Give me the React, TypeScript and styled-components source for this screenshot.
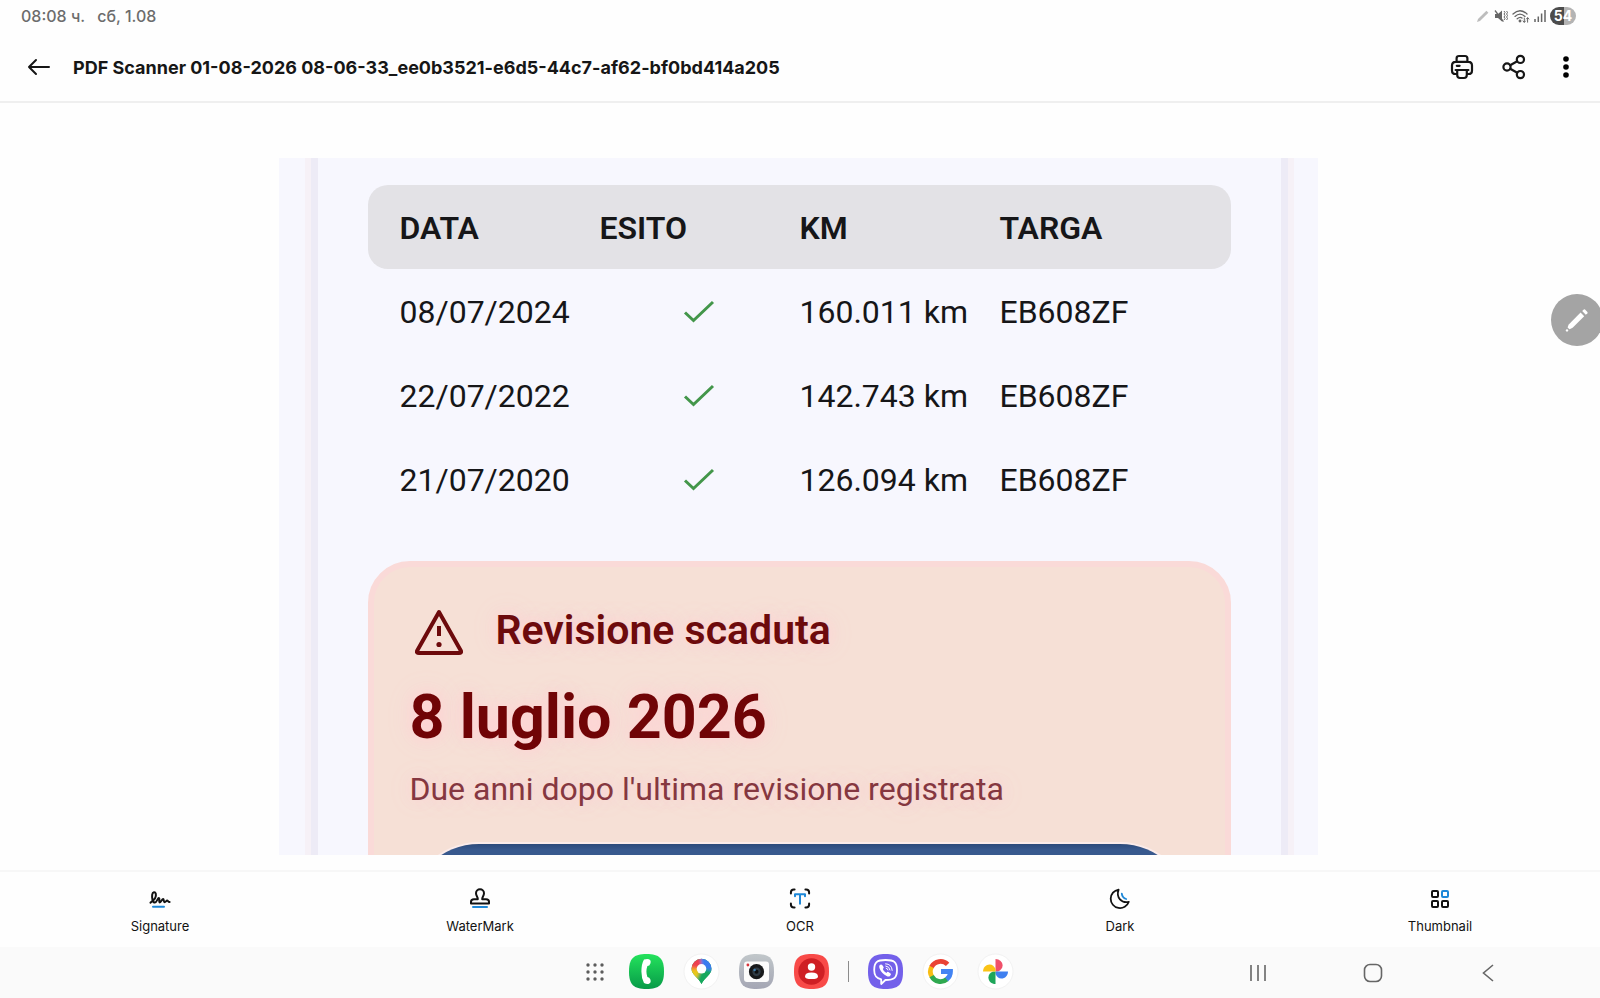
import React from "react";
import styled, { createGlobalStyle } from "styled-components";

const GlobalStyle = createGlobalStyle`
  *, *::before, *::after { box-sizing: border-box; }
  body { margin: 0; background: #fefefe; }
  svg { display: block; flex: none; }
`;

const uiFont = `Inter, "Open Sans", sans-serif`;
const docFont = `Roboto, "Liberation Sans", sans-serif`;

const Screen = styled.div`
  position: relative;
  display: flex;
  flex-direction: column;
  height: 100vh;
  overflow: hidden;
  background: #fefefe;
  color: #161616;
  font-family: ${uiFont};
`;

const StatusBar = styled.div`
  display: flex;
  align-items: center;
  justify-content: space-between;
  height: 32px;
  padding: 0 24px 0 21px;
  color: #6c6c6c;
  font-size: 16px;
  font-weight: 500;
  line-height: 20px;
`;

const StatusGroup = styled.div<{ $gap: number }>`
  display: flex;
  align-items: center;
  gap: ${(p) => p.$gap}px;
`;

const Battery = styled.span`
  width: 26px;
  height: 18px;
  border-radius: 9px;
  background: linear-gradient(90deg, #4c4c4c 54%, #b4b4b4 54%);
  color: #fff;
  font-size: 14px;
  font-weight: 700;
  line-height: 18px;
  text-align: center;
`;

const AppBar = styled.header`
  display: flex;
  align-items: center;
  height: 71px;
  padding: 0 19px 0 24px;
  border-bottom: 2px solid #efefef;
`;

const IconButton = styled.button`
  display: flex;
  align-items: center;
  justify-content: center;
  width: 30px;
  height: 40px;
  padding: 0;
  border: 0;
  background: none;
  color: inherit;
`;

const Title = styled.h1`
  flex: 1;
  margin: 0;
  padding: 2px 0 0 19px;
  font-size: 18px;
  font-weight: 700;
  line-height: 24px;
`;

const Actions = styled.div`
  display: flex;
  gap: 22px;
`;

const Viewer = styled.main`
  flex: 1;
  min-height: 0;
  padding: 55px 3px 15px 0;
`;

const Paper = styled.article`
  width: 65%;
  height: 100%;
  margin: 0 auto;
  padding: 0 30px 0 32px;
  overflow: hidden;
  background: #f7f7fe;
  font-family: ${docFont};
`;

const PaperInner = styled.div`
  height: 100%;
  padding: 27px 50px 0;
  border: solid #edebf6;
  border-width: 0 7px;
  box-shadow: -6px 0 #f6f1f7, 6px 0 #f6f1f7;
`;

const Table = styled.table`
  width: 100%;
  border-spacing: 0;
  table-layout: fixed;
  color: #161618;
  font-size: 32px;
  line-height: 36px;
  text-align: left;
`;

const HeadCell = styled.th<{ $width?: number }>`
  width: ${(p) => (p.$width ? `${p.$width}px` : "auto")};
  height: 84px;
  padding: 2px 0 0;
  background: #e3e2e6;
  font-weight: 600;
  white-space: nowrap;
  &:first-child { padding-left: 31px; border-radius: 20px 0 0 20px; }
  &:last-child { border-radius: 0 20px 20px 0; }
`;

const Cell = styled.td`
  height: 84px;
  padding: 2px 0 0;
  white-space: nowrap;
  &:first-child { padding-left: 31px; }
  svg { margin: 0 auto; }
`;

const Notice = styled.section`
  height: 440px;
  margin-top: 40px;
  padding: 41px 35px 0;
  border: 6px solid #fadad8;
  border-radius: 42px;
  background: #f6e0d6;
  text-shadow: 0 0 14px #ffd2d4, 0 0 28px #ffd2d4;
`;

const NoticeHead = styled.div`
  display: flex;
  align-items: flex-start;
  gap: 30px;
  padding-left: 4px;
  color: #6d0a0c;
`;

const NoticeTitle = styled.h2`
  margin: 0;
  font-size: 41px;
  font-weight: 600;
  line-height: 44px;
`;

const NoticeDate = styled.p`
  margin: 25px 0 0;
  color: #700406;
  font-size: 61px;
  font-weight: 700;
  line-height: 72px;
`;

const NoticeText = styled.p`
  margin: 18px 0 37px;
  color: #853740;
  font-size: 32px;
  line-height: 36px;
  white-space: nowrap;
`;

const NoticeAction = styled.button`
  display: block;
  width: 100%;
  height: 140px;
  border: 0;
  border-radius: 70px;
  background: linear-gradient(#2c4b7c, #38598e 6px);
  box-shadow: 0 0 0 2px #fbeceb;
`;

const Toolbar = styled.nav`
  display: grid;
  grid-template-columns: repeat(5, 1fr);
  height: 77px;
  border-top: 2px solid #f7f7f7;
`;

const Tool = styled.button`
  display: flex;
  flex-direction: column;
  align-items: center;
  gap: 7px;
  padding: 16px 0 0;
  border: 0;
  background: none;
  color: #121212;
  font-family: inherit;
  font-size: 13px;
  line-height: 18px;
`;

const SystemNav = styled.nav`
  display: grid;
  grid-template-columns: 1fr auto 1fr;
  align-items: center;
  height: 51px;
  background: #fafafa;
`;

const Dock = styled.div`
  display: flex;
  grid-column: 2;
  align-items: center;
  gap: 18px;
  margin: 0 6px 2px 0;
`;

const DockButton = styled.button<{ $width?: number }>`
  display: flex;
  align-items: center;
  justify-content: center;
  width: ${(p) => p.$width ?? 37}px;
  height: 37px;
  padding: 0;
  border: 0;
  background: none;
`;

const Divider = styled.span`
  width: 1px;
  height: 21px;
  background: #8c8c8c;
`;

const NavKeys = styled.div`
  display: flex;
  justify-content: flex-end;
  padding-right: 55px;
`;

const NavKey = styled.button`
  display: flex;
  align-items: center;
  justify-content: center;
  width: 115px;
  height: 40px;
  padding: 0;
  border: 0;
  background: none;
`;

const EditFab = styled.button`
  position: absolute;
  top: 294px;
  right: -3px;
  display: flex;
  align-items: center;
  justify-content: center;
  width: 52px;
  height: 52px;
  padding: 0;
  border: 0;
  border-radius: 50%;
  background: #a4a4a4;
`;

const inspections = [
  { date: "08/07/2024", km: "160.011 km", plate: "EB608ZF" },
  { date: "22/07/2022", km: "142.743 km", plate: "EB608ZF" },
  { date: "21/07/2020", km: "126.094 km", plate: "EB608ZF" },
];

const line = {
  fill: "none",
  stroke: "currentColor",
  strokeLinecap: "round" as const,
  strokeLinejoin: "round" as const,
};
const blue = "#1e88d8";

const Check = () => (
  <svg width="32" height="24" viewBox="0 0 32 24" role="img" aria-label="Regolare">
    <path d="M2 12.5 L10.5 20.5 L30 2" fill="none" stroke="#43964a" strokeWidth="3" />
  </svg>
);

const tools = [
  {
    label: "Signature",
    icon: (
      <svg width="22" height="22" viewBox="0 0 22 22" {...line} strokeWidth="2">
        <path d="M1.5 14.6 C5.5 12 7.4 8.4 6.8 5.8 C6.2 3.6 3.6 3.8 3.2 6.6 C2.7 10 3.6 14.6 5.8 14.6 C7.8 14.6 8.6 10 9.8 10 C11 10 9.6 14.4 10.8 14.4 C12.1 14.4 13 11 14.1 11 C15.1 11 14.4 14.2 15.6 14.2 C16.7 14.2 17.2 12.6 18.2 12.6 C19 12.6 19 14 20.6 14" />
        <path d="M4 18.8 H15" stroke={blue} />
      </svg>
    ),
  },
  {
    label: "WaterMark",
    icon: (
      <svg width="22" height="22" viewBox="0 0 22 22" {...line} strokeWidth="2">
        <path d="M8.8 11.2 C9 9 7 8 7 5.2 A4 4 0 0 1 15 5.2 C15 8 13 9 13.2 11.2 H17 Q20 11.2 20 13.8 V15.6 H2 V13.8 Q2 11.2 5 11.2 Z" />
        <path d="M4 19 H18" stroke={blue} />
      </svg>
    ),
  },
  {
    label: "OCR",
    icon: (
      <svg width="22" height="22" viewBox="0 0 22 22" {...line} strokeWidth="2">
        <path d="M1.9 5.4 V4.4 Q1.9 1.4 4.9 1.4 H5.6 M16.4 1.4 H17.1 Q20.1 1.4 20.1 4.4 V5.4 M20.1 15.6 V16.6 Q20.1 19.6 17.1 19.6 H16.4 M5.6 19.6 H4.9 Q1.9 19.6 1.9 16.6 V15.6" />
        <path d="M6 8.2 V6.2 H16 V8.2 M11 6.2 V15.8" stroke={blue} />
      </svg>
    ),
  },
  {
    label: "Dark",
    icon: (
      <svg width="22" height="22" viewBox="0 0 22 22" {...line} strokeWidth="1.8">
        <path d="M9.6 1.6 A9.3 9.3 0 1 0 19.8 13.8 C12.6 15.4 6.8 9.6 9.6 1.6 Z" />
        <path d="M12.8 5.6 Q13.2 9.6 17.2 11" stroke={blue} />
      </svg>
    ),
  },
  {
    label: "Thumbnail",
    icon: (
      <svg width="22" height="22" viewBox="0 0 22 22" {...line} strokeWidth="2">
        <rect x="3" y="3" width="6" height="6" rx="1" />
        <rect x="13" y="3" width="6" height="6" rx="1" stroke={blue} />
        <rect x="3" y="13" width="6" height="6" rx="1" />
        <rect x="13" y="13" width="6" height="6" rx="1" />
      </svg>
    ),
  },
];

const squircle =
  "M18.5 1 C31.5 1 36 5.5 36 18.5 C36 31.5 31.5 36 18.5 36 C5.5 36 1 31.5 1 18.5 C1 5.5 5.5 1 18.5 1 Z";

const handset =
  "M16 6.5 Q19 5.5 21 6.2 Q23.4 7.2 22.4 10.4 Q21.6 13 19.4 13 Q18.4 15.8 18.4 18.5 Q18.4 21.2 19.4 24 Q21.6 24 22.4 26.6 Q23.4 29.8 21 30.8 Q19 31.5 16 30 Q13.4 25 13.4 18.5 Q13.4 11 16 6.5 Z";

const apps = [
  {
    label: "Telefono",
    icon: (
      <>
        <defs>
          <linearGradient id="phone" x1="0" y1="0" x2="0" y2="1">
            <stop offset="0" stopColor="#24e35c" />
            <stop offset="1" stopColor="#079a48" />
          </linearGradient>
        </defs>
        <path d={squircle} fill="url(#phone)" />
        <path d={handset} fill="#fff" />
      </>
    ),
  },
  {
    label: "Maps",
    icon: (
      <>
        <defs>
          <clipPath id="pin">
            <path d="M18.5 5.8 A10 10 0 0 1 28.5 15.8 C28.5 22 21.5 24.5 18.5 31 C15.5 24.5 8.5 22 8.5 15.8 A10 10 0 0 1 18.5 5.8 Z" />
          </clipPath>
          <filter id="soft" x="-20%" y="-20%" width="140%" height="140%">
            <feGaussianBlur stdDeviation="1.4" />
          </filter>
        </defs>
        <circle cx="18.5" cy="18.5" r="17.5" fill="#fff" stroke="#f2f2f2" />
        <g clipPath="url(#pin)">
          <rect x="4" y="2" width="30" height="32" fill="#1ba75a" />
          <g filter="url(#soft)">
            <path d="M18.5 15.8 L17 0 L36 0 L36 19 Z" fill="#3a7cf0" />
            <path d="M18.5 15.8 L17 0 L0 0 L0 14 Z" fill="#ee4050" />
            <path d="M18.5 15.8 L0 12 L0 21 Z" fill="#f98a2c" />
            <path d="M18.5 15.8 L0 18 L0 34 L12 30 Z" fill="#e9c81a" />
            <path d="M18.5 15.8 L11 34 L36 34 L36 20 Z" fill="#17a85d" />
          </g>
        </g>
        <circle cx="18.5" cy="15.8" r="4.8" fill="#fff" />
      </>
    ),
  },
  {
    label: "Fotocamera",
    icon: (
      <>
        <defs>
          <linearGradient id="camera" x1="0" y1="0" x2="0" y2="1">
            <stop offset="0" stopColor="#c1c7ca" />
            <stop offset="1" stopColor="#a4a6b4" />
          </linearGradient>
        </defs>
        <path d={squircle} fill="url(#camera)" />
        <rect x="6" y="8.5" width="25" height="20.5" rx="3" fill="#fbfbfb" />
        <circle cx="18.5" cy="18.7" r="7.6" fill="#17191b" />
        <circle cx="18.5" cy="18.7" r="4.2" fill="#2f3b45" />
        <circle cx="18.5" cy="18.7" r="2" fill="#0c0e10" />
        <circle cx="16.6" cy="17" r="1.2" fill="#3f80b0" />
        <circle cx="9.9" cy="12" r="1.4" fill="#d8343a" />
      </>
    ),
  },
  {
    label: "Contatti",
    icon: (
      <>
        <path d={squircle} fill="#f84a48" />
        <circle cx="18.5" cy="18.5" r="13.2" fill="#cf1f24" />
        <circle cx="18.5" cy="14" r="3.7" fill="#fff" />
        <path d="M12 23.4 Q12 19.6 18.5 19.6 Q25 19.6 25 23.4 Q25 26 18.5 26 Q12 26 12 23.4 Z" fill="#fff" />
      </>
    ),
  },
  {
    label: "Viber",
    icon: (
      <>
        <path d={squircle} fill="#7360ea" />
        <path
          d="M18.6 7 C27.5 7 30 9.5 30 17 C30 24.6 27.5 27 18.4 27 L14.2 31 V26.4 C8.8 25.2 7.2 22.6 7.2 17 C7.2 9.5 9.7 7 18.6 7 Z"
          fill="none"
          stroke="#fff"
          strokeWidth="1.8"
          strokeLinejoin="round"
        />
        <path d="M12.4 12.6 Q14 10.6 15.2 12 L16.6 14 Q17 15 15.8 15.9 Q16.6 18.8 19.4 19.9 Q20.4 18.5 21.4 19 L23.6 20.6 Q24.6 21.6 23 23 Q21.6 24 19.6 23 Q14.4 20.4 12.4 15 Q12 13.6 12.4 12.6 Z" fill="#fff" />
        <path d="M18.6 10.8 Q24.8 11 25.2 17.4 M18.8 13 Q22.6 13.4 23 17 M19.2 15.2 Q20.8 15.4 21 17" fill="none" stroke="#fff" strokeWidth="1" strokeLinecap="round" />
      </>
    ),
  },
  {
    label: "Google",
    icon: (
      <>
        <circle cx="18.5" cy="18.5" r="17.5" fill="#fff" stroke="#f2f2f2" />
        <g fill="none" strokeWidth="4.8">
          <path d="M10 13.2 A10 10 0 0 0 10 23.8" stroke="#f8bd14" />
          <path d="M25.6 11.4 A10 10 0 0 0 9.6 13.9" stroke="#ea4335" />
          <path d="M9.6 23.1 A10 10 0 0 0 25 26.1" stroke="#2fa950" />
          <path d="M24.6 26.4 A10 10 0 0 0 28.5 18.5 H19" stroke="#4384f3" />
        </g>
      </>
    ),
  },
  {
    label: "Foto",
    icon: (
      <>
        <circle cx="18.5" cy="18.5" r="17.5" fill="#fff" stroke="#f2f2f2" />
        <path d="M18.5 18.5 V6 C22.5 6 25.6 9 25.6 12.6 C25.6 15.4 23.6 17.4 21 18.5 Z" fill="#f0506a" />
        <path d="M18.5 18.5 H31 C31 22.5 28 25.6 24.400 25.6 C21.6 25.6 19.6 23.6 18.5 21 Z" fill="#3f80f0" />
        <path d="M18.5 18.5 V31 C14.5 31 11.4 28 11.4 24.4 C11.4 21.6 13.4 19.6 16 18.5 Z" fill="#1ea65a" />
        <path d="M18.5 18.5 H6 C6 14.5 9 11.4 12.6 11.4 C15.4 11.4 17.4 13.4 18.5 16 Z" fill="#fbc316" />
      </>
    ),
  },
];

const AppButton = ({ app }: { app: (typeof apps)[number] }) => (
  <DockButton aria-label={app.label}>
    <svg width="37" height="37" viewBox="0 0 37 37">
      {app.icon}
    </svg>
  </DockButton>
);

export default function App() {
  return (
    <Screen>
      <GlobalStyle />
      <StatusBar>
        <StatusGroup $gap={12}>
          <span>08:08 ч.</span>
          <span>сб, 1.08</span>
        </StatusGroup>
        <StatusGroup $gap={4}>
          <svg width="14" height="14" viewBox="0 0 14 14" fill="#bdbdbd">
            <path d="M1 13 L2 10 L10.4 1.8 L12.4 3.8 L4 12 Z" />
          </svg>
          <svg width="14" height="14" viewBox="0 0 14 14" fill="none" stroke="#666">
            <path d="M1 5 H4 L8 1.6 V12.4 L4 9 H1 Z" fill="#666" stroke="none" />
            <path d="M1 1.5 L9.4 12.6" strokeWidth="1.3" />
            <path d="M10 2 L11 3.5 L10 5 L11 6.5 L10 8 L11 9.5 L10 11 M12.6 2 L13.5 3.5 L12.6 5 L13.5 6.5 L12.6 8 L13.5 9.5 L12.6 11" />
          </svg>
          <svg width="18" height="15" viewBox="0 0 18 15" fill="none" stroke="#666" strokeWidth="1.3" strokeLinecap="round">
            <path d="M1 5 Q8 -1.6 15 5 M3 7.4 Q8 2.8 13 7.4 M5.2 9.8 Q8 7.4 10 9" />
            <circle cx="8" cy="12" r=".8" fill="#666" />
            <path d="M12.3 9 V13 M11 12 L12.3 13.4 L13.5 12 M15.6 13.2 V9 M14.4 10 L15.6 8.6 L16.9 10" strokeWidth="1" />
          </svg>
          <svg width="12" height="14" viewBox="0 0 12 14" stroke="#666" strokeWidth="1.5">
            <path d="M1 10 V13 M4.3 7.5 V13 M7.6 4.5 V13 M11 1 V13" />
          </svg>
          <Battery>54</Battery>
        </StatusGroup>
      </StatusBar>

      <AppBar>
        <IconButton aria-label="Back">
          <svg width="24" height="20" viewBox="0 0 24 20" {...line} strokeWidth="2">
            <path d="M22 10 H2 M9 3 L2 10 L9 17" />
          </svg>
        </IconButton>
        <Title>PDF Scanner 01-08-2026 08-06-33_ee0b3521-e6d5-44c7-af62-bf0bd414a205</Title>
        <Actions>
          <IconButton aria-label="Print">
            <svg width="24" height="26" viewBox="0 0 24 26" {...line} strokeWidth="2.2">
              <path d="M6.6 7.6 V4.4 Q6.6 2 9 2 H15 Q17.4 2 17.4 4.4 V7.6 M7 20 H5.6 Q2 20 2 16.4 V11.4 Q2 7.8 5.6 7.8 H18.4 Q22 7.8 22 11.4 V16.4 Q22 20 18.4 20 H17 M5.6 16 H18.4 M7.2 16 V21 Q7.2 24 10 24 H14 Q16.8 24 16.8 21 V16 M6.8 11.8 H9.6" />
            </svg>
          </IconButton>
          <IconButton aria-label="Share">
            <svg width="24" height="26" viewBox="0 0 24 26" {...line} strokeWidth="2.2">
              <circle cx="5" cy="13" r="3.6" />
              <circle cx="18.4" cy="5.4" r="3.6" />
              <circle cx="18.4" cy="20.6" r="3.6" />
              <path d="M8.2 11.2 L15.2 7.2 M8.2 14.8 L15.2 18.8" />
            </svg>
          </IconButton>
          <IconButton aria-label="More">
            <svg width="6" height="24" viewBox="0 0 6 24" fill="#000">
              <circle cx="3" cy="4" r="2.8" />
              <circle cx="3" cy="12" r="2.8" />
              <circle cx="3" cy="20" r="2.8" />
            </svg>
          </IconButton>
        </Actions>
      </AppBar>

      <Viewer>
        <Paper>
          <PaperInner>
            <Table>
              <thead>
                <tr>
                  <HeadCell $width={231}>DATA</HeadCell>
                  <HeadCell $width={200}>ESITO</HeadCell>
                  <HeadCell $width={200}>KM</HeadCell>
                  <HeadCell>TARGA</HeadCell>
                </tr>
              </thead>
              <tbody>
                {inspections.map((row) => (
                  <tr key={row.date}>
                    <Cell>{row.date}</Cell>
                    <Cell>
                      <Check />
                    </Cell>
                    <Cell>{row.km}</Cell>
                    <Cell>{row.plate}</Cell>
                  </tr>
                ))}
              </tbody>
            </Table>
            <Notice>
              <NoticeHead>
                <svg width="52" height="48" viewBox="0 0 52 48" {...line} strokeWidth="4">
                  <path d="M26 4 L48 43 Q48.6 45 46 45 H6 Q3.4 45 4 43 Z" />
                  <path d="M26 18 V28" strokeLinecap="butt" />
                  <circle cx="26" cy="36.5" r="2.6" fill="currentColor" stroke="none" />
                </svg>
                <NoticeTitle>Revisione scaduta</NoticeTitle>
              </NoticeHead>
              <NoticeDate>8 luglio 2026</NoticeDate>
              <NoticeText>Due anni dopo l'ultima revisione registrata</NoticeText>
              <NoticeAction aria-label="Prenota revisione" />
            </Notice>
          </PaperInner>
        </Paper>
      </Viewer>

      <Toolbar>
        {tools.map((tool) => (
          <Tool key={tool.label}>
            {tool.icon}
            {tool.label}
          </Tool>
        ))}
      </Toolbar>

      <SystemNav>
        <Dock>
          <DockButton $width={30} aria-label="App">
            <svg width="20" height="20" viewBox="0 0 20 20" fill="#5c5c5c">
              {[3, 10, 17].map((y) => [3, 10, 17].map((x) => <circle key={`${x}-${y}`} cx={x} cy={y} r="1.7" />))}
            </svg>
          </DockButton>
          {apps.slice(0, 4).map((app) => (
            <AppButton key={app.label} app={app} />
          ))}
          <Divider />
          {apps.slice(4).map((app) => (
            <AppButton key={app.label} app={app} />
          ))}
        </Dock>
        <NavKeys>
          <NavKey aria-label="Recents">
            <svg width="18" height="18" viewBox="0 0 18 18" stroke="#666" strokeWidth="1.6">
              <path d="M2 1 V17 M9 1 V17 M16 1 V17" />
            </svg>
          </NavKey>
          <NavKey aria-label="Home">
            <svg width="20" height="20" viewBox="0 0 20 20" fill="none" stroke="#666" strokeWidth="1.6">
              <rect x="1.5" y="1.5" width="17" height="17" rx="5.5" />
            </svg>
          </NavKey>
          <NavKey aria-label="Back">
            <svg width="12" height="20" viewBox="0 0 12 20" fill="none" stroke="#666" strokeWidth="1.6">
              <path d="M11 2 L1.5 10 L11 18" />
            </svg>
          </NavKey>
        </NavKeys>
      </SystemNav>

      <EditFab aria-label="Edit">
        <svg width="24" height="24" viewBox="0 0 24 24" fill="#fff">
          <path d="M2.6 19.5 Q3 17.5 4 16.2 L15.6 4.6 L19.2 8.2 L7.6 19.8 Q6.3 20.8 4.4 21.2 Z" />
          <path d="M17.2 3 L18.8 1.4 Q19.4 1 20 1.5 L22.4 4 Q22.9 4.6 22.4 5.2 L20.8 6.7 Z" />
          <circle cx="2" cy="22.4" r="1.2" />
        </svg>
      </EditFab>
    </Screen>
  );
}
